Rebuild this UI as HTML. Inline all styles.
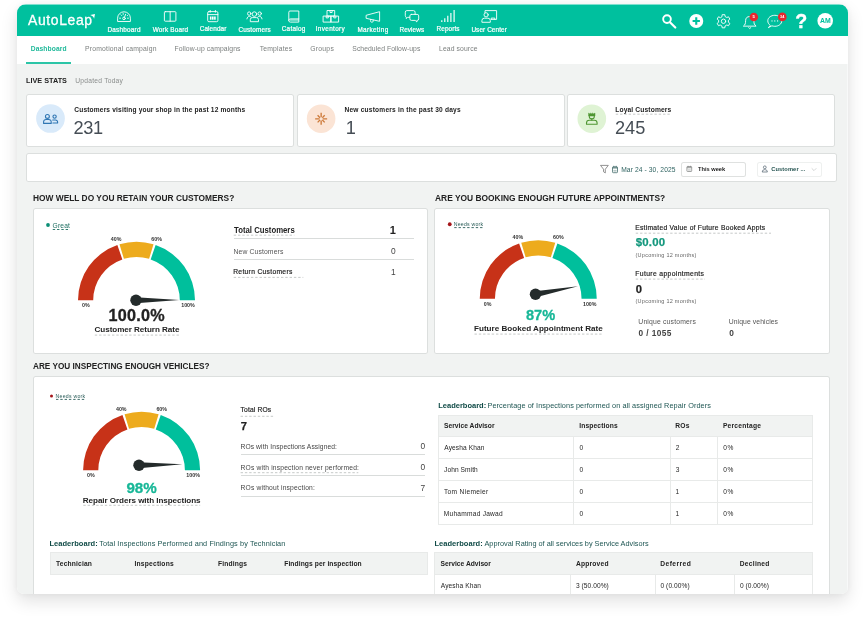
<!DOCTYPE html>
<html lang="en"><head><meta charset="utf-8"><title>AutoLeap Dashboard</title>
<style>
html,body{margin:0;padding:0;background:#fff;}
body{width:864px;height:620px;overflow:hidden;position:relative;font-family:"Liberation Sans", sans-serif;}
#frame{position:absolute;left:17.0px;top:4.0px;width:831.0px;height:590.0px;border-radius:9px 9px 7px 7px;overflow:hidden;background:#f1f3f2;}
#shadow{position:absolute;left:17.0px;top:4.0px;width:831.0px;height:590.0px;border-radius:9px 9px 7px 7px;box-shadow:0 7px 17px rgba(0,0,0,0.12),0 0 6px rgba(0,0,0,0.045);}
#page{will-change:transform;position:absolute;left:-17.0px;top:-4.0px;width:864px;height:620px;}
.b{position:absolute;box-sizing:border-box;}
.t{position:absolute;white-space:pre;line-height:normal;}
svg.ov{position:absolute;left:0;top:0;}
</style></head>
<body>
<div id="shadow"></div>
<div id="frame"><div id="page">

<div class="b" style="left:17.00px;top:4.00px;width:831.00px;height:31.80px;background:#00c09e;"></div>
<div class="b" style="left:17.00px;top:4.00px;width:831.00px;height:1.00px;background:#7fdfce;"></div>
<div class="b" style="left:17.00px;top:35.80px;width:831.00px;height:28.20px;background:#fff;"></div>
<div class="b" style="left:26.20px;top:62.00px;width:45.00px;height:2.00px;background:#2cc5a7;"></div>
<div class="b" style="left:26.00px;top:94.00px;width:268.00px;height:53.00px;background:#fff;box-shadow:inset 0 0 0 1px #dcdfde;border-radius:2.5px;"></div>
<div class="b" style="left:296.75px;top:94.00px;width:268.25px;height:53.00px;background:#fff;box-shadow:inset 0 0 0 1px #dcdfde;border-radius:2.5px;"></div>
<div class="b" style="left:567.00px;top:94.00px;width:268.00px;height:53.00px;background:#fff;box-shadow:inset 0 0 0 1px #dcdfde;border-radius:2.5px;"></div>
<div class="b" style="left:26.00px;top:152.75px;width:811.00px;height:29.25px;background:#fff;box-shadow:inset 0 0 0 1px #dcdfde;border-radius:2.5px;"></div>
<div class="b" style="left:681.25px;top:161.50px;width:64.75px;height:15.30px;background:#fff;box-shadow:inset 0 0 0 1px #dfe1e0;border-radius:2.5px;"></div>
<div class="b" style="left:756.75px;top:161.50px;width:65.25px;height:15.30px;background:#fff;box-shadow:inset 0 0 0 1px #eef0ef;border-radius:2.5px;"></div>
<div class="b" style="left:33.00px;top:208.30px;width:395.10px;height:145.30px;background:#fff;box-shadow:inset 0 0 0 1px #dcdfde;border-radius:2.5px;"></div>
<div class="b" style="left:434.00px;top:208.30px;width:396.00px;height:145.30px;background:#fff;box-shadow:inset 0 0 0 1px #dcdfde;border-radius:2.5px;"></div>
<div class="b" style="left:33.00px;top:376.00px;width:797.00px;height:264.00px;background:#fff;box-shadow:inset 0 0 0 1px #dcdfde;border-radius:2.5px;"></div>
<div class="b" style="left:233.70px;top:238.20px;width:180.60px;height:1px;background:#d9dcdb"></div>
<div class="b" style="left:233.70px;top:259.20px;width:180.60px;height:1px;background:#d9dcdb"></div>
<div class="b" style="left:240.60px;top:454.20px;width:184.10px;height:1px;background:#d9dcdb"></div>
<div class="b" style="left:240.60px;top:475.20px;width:184.10px;height:1px;background:#d9dcdb"></div>
<div class="b" style="left:240.60px;top:495.90px;width:184.10px;height:1px;background:#d9dcdb"></div>
<div class="b" style="left:438.00px;top:415.00px;width:375.00px;height:21.30px;background:#f1f3f2;"></div>
<div class="b" style="left:438.00px;top:436.30px;width:375.00px;height:88.00px;background:#fff;"></div>
<div class="b" style="left:438.00px;top:414.50px;width:375.00px;height:1px;background:#e8eae9"></div>
<div class="b" style="left:438.00px;top:435.80px;width:375.00px;height:1px;background:#e8eae9"></div>
<div class="b" style="left:438.00px;top:457.80px;width:375.00px;height:1px;background:#e8eae9"></div>
<div class="b" style="left:438.00px;top:479.80px;width:375.00px;height:1px;background:#e8eae9"></div>
<div class="b" style="left:438.00px;top:501.80px;width:375.00px;height:1px;background:#e8eae9"></div>
<div class="b" style="left:438.00px;top:523.80px;width:375.00px;height:1px;background:#e8eae9"></div>
<div class="b" style="left:438.00px;top:415.00px;width:1px;height:109.30px;background:#e8eae9"></div>
<div class="b" style="left:573.00px;top:436.30px;width:1px;height:88.00px;background:#e8eae9"></div>
<div class="b" style="left:670.10px;top:436.30px;width:1px;height:88.00px;background:#e8eae9"></div>
<div class="b" style="left:717.10px;top:436.30px;width:1px;height:88.00px;background:#e8eae9"></div>
<div class="b" style="left:812.00px;top:415.00px;width:1px;height:109.30px;background:#e8eae9"></div>
<div class="b" style="left:49.50px;top:552.00px;width:378.75px;height:22.75px;background:#f1f3f2;box-shadow:inset 0 0 0 1px #e8eae9;"></div>
<div class="b" style="left:434.00px;top:552.00px;width:379.00px;height:22.50px;background:#f1f3f2;"></div>
<div class="b" style="left:434.00px;top:574.50px;width:379.00px;height:25.50px;background:#fff;"></div>
<div class="b" style="left:434.00px;top:552.00px;width:379.00px;height:1px;background:#e8eae9"></div>
<div class="b" style="left:434.00px;top:574.00px;width:379.00px;height:1px;background:#e8eae9"></div>
<div class="b" style="left:434.00px;top:552.00px;width:1px;height:48.00px;background:#e8eae9"></div>
<div class="b" style="left:570.00px;top:574.50px;width:1px;height:25.50px;background:#e8eae9"></div>
<div class="b" style="left:655.00px;top:574.50px;width:1px;height:25.50px;background:#e8eae9"></div>
<div class="b" style="left:734.00px;top:574.50px;width:1px;height:25.50px;background:#e8eae9"></div>
<div class="b" style="left:812.00px;top:552.00px;width:1px;height:48.00px;background:#e8eae9"></div>
<div class="b" style="left:846.60px;top:64.00px;width:1.40px;height:530.00px;background:#f8f9f9;"></div>

<svg class="ov" width="864" height="620" viewBox="0 0 864 620">
<path d="M90.2 15.1 L95 14 L94.1 18.7 C93.7 17 92.6 16 90.2 15.1 Z" fill="#fff"/>
<g fill="none" stroke="#fff" stroke-width="0.9" stroke-linejoin="round" stroke-linecap="round"><path d="M117.6 21.1 V18.2 a6.4 6.4 0 0 1 12.8 0 V21.1 Z"/><circle cx="124" cy="18.4" r="1.3"/><path d="M124.5 17.2 L125.6 14.3 M119.6 18.2 h0.9 M127.5 18.2 h0.9 M121 14.9 l0.6 0.6 M127.6 15.3 l-0.4 0.4 M123.2 13.6 v0.8"/></g>
<g fill="none" stroke="#fff" stroke-width="0.9" stroke-linejoin="round" stroke-linecap="round"><rect x="164.4" y="11.7" width="11.5" height="9.5" rx="0.8"/><path d="M170.15 11.7 V21.2"/></g>
<g fill="none" stroke="#fff" stroke-width="0.9" stroke-linejoin="round" stroke-linecap="round"><rect x="207.7" y="11.6" width="10.2" height="10.1" rx="1.2"/><path d="M207.7 14.6 H217.9 M210.2 10.4 V12.2 M215.4 10.4 V12.2"/></g><g fill="#fff"><rect x="209.9" y="16.5" width="1.6" height="3.2"/><rect x="212" y="16.5" width="1.6" height="3.2"/><rect x="214.1" y="16.5" width="1.6" height="3.2"/></g>
<g fill="none" stroke="#fff" stroke-width="0.9" stroke-linejoin="round" stroke-linecap="round"><circle cx="254.4" cy="14.1" r="2.3"/><circle cx="249.2" cy="13.6" r="1.7"/><circle cx="259.7" cy="13.6" r="1.7"/><path d="M250.3 21.3 V19.6 a2 2 0 0 1 2 -2 h4.2 a2 2 0 0 1 2 2 V21.3 Z"/><path d="M246.9 18.9 c0.2 -1.6 1.2 -2.5 2.6 -2.5 c0.7 0 1.2 0.2 1.6 0.6 M262 18.9 c-0.2 -1.6 -1.2 -2.5 -2.6 -2.5 c-0.7 0 -1.2 0.2 -1.6 0.6"/></g>
<g fill="none" stroke="#fff" stroke-width="0.9" stroke-linejoin="round" stroke-linecap="round"><path d="M288.8 20.5 V12.2 a1.2 1.2 0 0 1 1.2 -1.2 H298.8 V22.1 H290.4 a1.6 1.6 0 0 1 0 -3.2 H298.8"/></g><path d="M290 20 H298.8" stroke="#fff" stroke-width="1.4" fill="none" opacity="0.6"/>
<g fill="none" stroke="#fff" stroke-width="0.9" stroke-linejoin="round" stroke-linecap="round"><rect x="327.4" y="10.5" width="7.3" height="5.6"/><rect x="323.5" y="16.1" width="7.6" height="6"/><rect x="331.1" y="16.1" width="7.5" height="6"/><path d="M330 10.5 v2 h2.1 v-2 M326.2 16.1 v1.8 h2.1 v-1.8 M333.8 16.1 v1.8 h2.1 v-1.8"/></g>
<g fill="none" stroke="#fff" stroke-width="0.9" stroke-linejoin="round" stroke-linecap="round"><path d="M366.5 15.2 L379.6 11.7 V21.3 L366.5 18.4 Z"/><path d="M370.6 19.4 v1.2 a1.3 1.3 0 0 0 2.6 0.6 v-1.2"/></g>
<g fill="none" stroke="#fff" stroke-width="0.9" stroke-linejoin="round" stroke-linecap="round"><path d="M409.6 17.3 H407.6 L406.3 18.6 V17.2 a1.6 1.6 0 0 1 -1 -1.5 V12.2 a1.6 1.6 0 0 1 1.6 -1.6 h6.6 a1.6 1.6 0 0 1 1.6 1.6 V14.4"/><path d="M411.4 14.4 h5.8 a1.5 1.5 0 0 1 1.5 1.5 v3 a1.5 1.5 0 0 1 -1.5 1.5 h-0.3 v1.6 l-1.7 -1.6 h-3.8 a1.5 1.5 0 0 1 -1.5 -1.5 v-3 a1.5 1.5 0 0 1 1.5 -1.5 Z"/></g>
<g stroke="#fff" stroke-width="1.15" fill="none"><path d="M441.8 21.9 V20.2 M444.8 21.9 V18.2 M447.8 21.9 V15.8 M450.9 21.9 V13 M454.1 21.9 V10"/></g>
<g fill="none" stroke="#fff" stroke-width="0.9" stroke-linejoin="round" stroke-linecap="round"><path d="M485 12.6 V10.6 H496.6 V19.4 H491.4"/><circle cx="486.1" cy="14.8" r="2.1"/><path d="M481.9 21.9 V20.6 a2.4 2.4 0 0 1 2.4 -2.4 h3.6 a2.4 2.4 0 0 1 2.4 2.4 V21.9 Z"/><path d="M491.2 19.4 v-1.3 h3.6 v1.3"/></g>
<circle cx="667" cy="19.1" r="3.85" fill="none" stroke="#fff" stroke-width="1.9"/><path d="M670.2 22.5 L675.3 27.5" stroke="#fff" stroke-width="2.2" stroke-linecap="round"/>
<circle cx="696.25" cy="21" r="7" fill="#fff"/><path d="M692.6 21 H699.9 M696.25 17.35 V24.65" stroke="#00c09e" stroke-width="2.1"/>
<path d="M721.93 16.50 L722.17 14.68 L724.83 14.68 L725.07 16.50 L726.82 17.51 L728.52 16.81 L729.85 19.12 L728.40 20.24 L728.40 22.26 L729.85 23.38 L728.52 25.69 L726.82 24.99 L725.07 26.00 L724.83 27.82 L722.17 27.82 L721.93 26.00 L720.18 24.99 L718.48 25.69 L717.15 23.38 L718.60 22.26 L718.60 20.24 L717.15 19.12 L718.48 16.81 L720.18 17.51 Z" fill="none" stroke="#fff" stroke-width="0.9" stroke-linejoin="round" stroke-linecap="round"/><circle cx="723.5" cy="21.25" r="2.2" fill="none" stroke="#fff" stroke-width="0.9" stroke-linejoin="round" stroke-linecap="round"/>
<g fill="none" stroke="#fff" stroke-width="0.9" stroke-linejoin="round" stroke-linecap="round"><path d="M743.7 25.9 c1.5 -1.2 1.9 -2.4 1.9 -5.2 a4.15 4.15 0 0 1 8.3 0 c0 2.8 0.4 4 1.9 5.2 Z"/><path d="M748.7 27.6 l1.05 0.9 l1.05 -0.9"/></g>
<circle cx="753.8" cy="17" r="4.3" fill="#e9262e"/>
<g fill="none" stroke="#fff" stroke-width="0.9" stroke-linejoin="round" stroke-linecap="round"><path d="M770 25.2 c-1.4 -1.1 -2.2 -2.6 -2.2 -4.4 c0 -3.1 3.1 -5.5 7 -5.5 s7 2.4 7 5.5 s-3.1 5.5 -7 5.5 c-1 0 -2 -0.2 -2.9 -0.5 l-3.2 1.7 Z"/></g><g fill="#fff"><circle cx="772" cy="20.9" r="0.6"/><circle cx="774.8" cy="20.9" r="0.6"/><circle cx="777.6" cy="20.9" r="0.6"/></g>
<circle cx="782.3" cy="16.9" r="4.35" fill="#e9262e"/>
<circle cx="825.2" cy="20.7" r="7.8" fill="#fff"/>
<circle cx="50.5" cy="118.5" r="14.35" fill="#d9eafa"/>
<circle cx="321.1" cy="118.7" r="14.3" fill="#fbe4d5"/>
<circle cx="591.8" cy="118.7" r="14.3" fill="#dff3d4"/>
<line x1="615.75" y1="114.20" x2="671.00" y2="114.20" stroke="#c0c3c2" stroke-width="0.9" stroke-dasharray="2.4 1.9"/>
<g fill="none" stroke="#2f76b3" stroke-width="1.1" stroke-linecap="round" stroke-linejoin="round"><circle cx="47.4" cy="116.4" r="1.95"/><path d="M43.6 123.4 V121.9 a2.4 2.4 0 0 1 2.4 -2.4 h2.8 a2.4 2.4 0 0 1 2.4 2.4 V123.4 Z"/><circle cx="54.6" cy="116.6" r="1.65"/><path d="M52.7 120 h2.8 a2.1 2.1 0 0 1 2.1 2.1 V123 H52.9"/></g>
<path d="M322.75 118.85 L327.15 118.85 M322.35 120.05 L324.69 122.39 M321.15 120.45 L321.15 124.85 M319.95 120.05 L317.61 122.39 M319.55 118.85 L315.15 118.85 M319.95 117.65 L317.61 115.31 M321.15 117.25 L321.15 112.85 M322.35 117.65 L324.69 115.31 " fill="none" stroke="#cd7a3a" stroke-width="1.35" stroke-linecap="butt"/>
<path d="M588.6 113.1 l1.3 0.8 l0.95 -0.9 l0.95 0.9 l0.95 -0.9 l0.95 0.9 l1.3 -0.8 V116 H588.6 Z" fill="#4f9632" stroke="#4f9632" stroke-width="0.5" stroke-linejoin="round"/>
<g fill="none" stroke="#4f9632" stroke-width="1.1" stroke-linecap="round" stroke-linejoin="round"><path d="M589.3 116 v0.4 a2.5 2.5 0 0 0 5 0 v-0.4"/><path d="M591.8 118.9 v1.2"/><path d="M586.5 124.3 V123 a2.8 2.8 0 0 1 2.8 -2.8 h5 a2.8 2.8 0 0 1 2.8 2.8 V124.3 Z"/></g>
<path d="M600.5 165.4 H608.3 L605.3 169.2 V172.9 L603.5 171.7 V169.2 Z" fill="none" stroke="#777" stroke-width="0.8" stroke-linejoin="round"/>
<g fill="none" stroke="#3b6665" stroke-width="0.75" stroke-linejoin="round"><rect x="612.5" y="166.9" width="5" height="5.8" rx="0.8"/><path d="M613.8 165.8 V167.4 M616.2 165.8 V167.4"/></g><rect x="612.5" y="166.9" width="5" height="1.8" fill="#3b6665" opacity="0.55"/><rect x="613.4" y="169.9" width="3.2" height="1.7" fill="#34605f" opacity="0.35"/>
<g fill="none" stroke="#8a8d8c" stroke-width="0.8"><rect x="686.9" y="166.6" width="4.8" height="4.9" rx="0.6"/><path d="M688.1 165.8 V167 M690.5 165.8 V167"/></g><rect x="686.9" y="166.6" width="4.8" height="1.7" fill="#8a8d8c" opacity="0.7"/><rect x="687.8" y="169.2" width="3" height="1.5" fill="#8a8d8c" opacity="0.4"/>
<g fill="none" stroke="#4d5f6b" stroke-width="0.7" stroke-linejoin="round"><circle cx="764.8" cy="167.3" r="1.4"/><path d="M762.2 172 a2.6 2.4 0 0 1 5.2 0 Z"/></g>
<path d="M811.7 168.3 L814 170.6 L816.3 168.3" fill="none" stroke="#c9cccb" stroke-width="0.8"/>
<path d="M78.00 300.30 A58.5 58.5 0 0 1 117.36 245.02 L122.33 259.38 A43.3 43.3 0 0 0 93.20 300.30 Z" fill="#c73218"/>
<path d="M119.49 244.33 A58.5 58.5 0 0 1 153.51 244.33 L149.09 258.87 A43.3 43.3 0 0 0 123.91 258.87 Z" fill="#edab1d"/>
<path d="M155.64 245.02 A58.5 58.5 0 0 1 195.00 300.30 L179.80 300.30 A43.3 43.3 0 0 0 150.67 259.38 Z" fill="#00bf9c"/>
<path d="M136.02 303.25 L179.20 300.00 L135.98 297.25 Z" fill="#242b2b"/><circle cx="136" cy="300.25" r="5.7" fill="#242b2b"/>
<circle cx="48" cy="225" r="1.9" fill="#0b8f76"/>
<line x1="52.75" y1="229.50" x2="70.00" y2="229.50" stroke="#1d6e60" stroke-width="0.9" stroke-dasharray="2.4 1.9"/>
<line x1="94.80" y1="335.10" x2="179.00" y2="335.10" stroke="#c0c3c2" stroke-width="0.9" stroke-dasharray="2.4 1.9"/>
<line x1="233.70" y1="235.20" x2="294.30" y2="235.20" stroke="#c0c3c2" stroke-width="0.9" stroke-dasharray="2.4 1.9"/>
<line x1="233.70" y1="277.40" x2="303.30" y2="277.40" stroke="#c0c3c2" stroke-width="0.9" stroke-dasharray="2.4 1.9"/>
<path d="M479.75 298.80 A58.5 58.5 0 0 1 519.11 243.52 L524.08 257.88 A43.3 43.3 0 0 0 494.95 298.80 Z" fill="#c73218"/>
<path d="M521.24 242.83 A58.5 58.5 0 0 1 555.26 242.83 L550.84 257.37 A43.3 43.3 0 0 0 525.66 257.37 Z" fill="#edab1d"/>
<path d="M557.39 243.52 A58.5 58.5 0 0 1 596.75 298.80 L581.55 298.80 A43.3 43.3 0 0 0 552.42 257.88 Z" fill="#00bf9c"/>
<path d="M536.06 297.20 L578.00 286.20 L534.94 291.30 Z" fill="#242b2b"/><circle cx="535.5" cy="294.25" r="5.7" fill="#242b2b"/>
<circle cx="449.75" cy="224.25" r="1.9" fill="#a5161a"/>
<line x1="454.25" y1="227.60" x2="483.00" y2="227.60" stroke="#2c5e5a" stroke-width="0.9" stroke-dasharray="2.4 1.9"/>
<line x1="474.50" y1="334.10" x2="602.50" y2="334.10" stroke="#c0c3c2" stroke-width="0.9" stroke-dasharray="2.4 1.9"/>
<line x1="635.75" y1="233.20" x2="771.00" y2="233.20" stroke="#c0c3c2" stroke-width="0.9" stroke-dasharray="2.4 1.9"/>
<line x1="635.75" y1="279.10" x2="705.00" y2="279.10" stroke="#c0c3c2" stroke-width="0.9" stroke-dasharray="2.4 1.9"/>
<path d="M83.10 470.30 A58.5 58.5 0 0 1 122.46 415.02 L127.43 429.38 A43.3 43.3 0 0 0 98.30 470.30 Z" fill="#c73218"/>
<path d="M124.59 414.33 A58.5 58.5 0 0 1 158.61 414.33 L154.19 428.87 A43.3 43.3 0 0 0 129.01 428.87 Z" fill="#edab1d"/>
<path d="M160.74 415.02 A58.5 58.5 0 0 1 200.10 470.30 L184.90 470.30 A43.3 43.3 0 0 0 155.77 429.38 Z" fill="#00bf9c"/>
<path d="M139.07 468.25 L182.30 464.20 L138.93 462.25 Z" fill="#242b2b"/><circle cx="139" cy="465.25" r="5.7" fill="#242b2b"/>
<circle cx="51.5" cy="396" r="1.5" fill="#a5161a"/>
<line x1="56.00" y1="399.40" x2="85.00" y2="399.40" stroke="#2c5e5a" stroke-width="0.9" stroke-dasharray="2.4 1.9"/>
<line x1="83.30" y1="505.30" x2="200.20" y2="505.30" stroke="#c0c3c2" stroke-width="0.9" stroke-dasharray="2.4 1.9"/>
<line x1="240.60" y1="416.30" x2="274.00" y2="416.30" stroke="#c0c3c2" stroke-width="0.9" stroke-dasharray="2.4 1.9"/>
<line x1="240.60" y1="472.70" x2="358.30" y2="472.70" stroke="#c0c3c2" stroke-width="0.9" stroke-dasharray="2.4 1.9"/>
</svg>

<span class="t" style="top:12.00px;font-size:13.9px;color:#fff;-webkit-text-stroke:0.3px #fff;letter-spacing:0.643px;left:28.10px;">AutoLeap</span>
<span class="t" style="top:26.00px;font-size:6.4px;color:#fff;-webkit-text-stroke:0.2px #fff;letter-spacing:0.231px;left:107.40px;">Dashboard</span>
<span class="t" style="top:26.00px;font-size:6.4px;color:#fff;-webkit-text-stroke:0.2px #fff;letter-spacing:0.194px;left:152.75px;">Work Board</span>
<span class="t" style="top:25.00px;font-size:6.4px;color:#fff;-webkit-text-stroke:0.2px #fff;letter-spacing:0.093px;left:199.75px;">Calendar</span>
<span class="t" style="top:26.00px;font-size:6.4px;color:#fff;-webkit-text-stroke:0.2px #fff;letter-spacing:0.169px;left:238.50px;">Customers</span>
<span class="t" style="top:25.00px;font-size:6.4px;color:#fff;-webkit-text-stroke:0.2px #fff;letter-spacing:0.250px;left:281.75px;">Catalog</span>
<span class="t" style="top:25.00px;font-size:6.4px;color:#fff;-webkit-text-stroke:0.2px #fff;letter-spacing:0.344px;left:315.75px;">Inventory</span>
<span class="t" style="top:26.00px;font-size:6.4px;color:#fff;-webkit-text-stroke:0.2px #fff;letter-spacing:0.344px;left:357.40px;">Marketing</span>
<span class="t" style="top:26.00px;font-size:6.4px;color:#fff;-webkit-text-stroke:0.2px #fff;letter-spacing:0.083px;left:399.50px;">Reviews</span>
<span class="t" style="top:25.00px;font-size:6.4px;color:#fff;-webkit-text-stroke:0.2px #fff;letter-spacing:0.108px;left:436.50px;">Reports</span>
<span class="t" style="top:26.00px;font-size:6.4px;color:#fff;-webkit-text-stroke:0.2px #fff;letter-spacing:0.100px;left:471.40px;">User Center</span>
<span class="t" style="top:14.00px;font-size:4.2px;color:#fff;font-weight:700;left:752.55px;">5</span>
<span class="t" style="top:15.00px;font-size:3.8px;color:#fff;font-weight:700;left:780.05px;">34</span>
<span class="t" style="top:10.00px;font-size:19.6px;color:#fff;font-weight:700;-webkit-text-stroke:0.35px #fff;left:795.23px;">?</span>
<span class="t" style="top:17.00px;font-size:6.9px;color:#00c09e;font-weight:700;left:819.95px;">AM</span>
<span class="t" style="top:45.00px;font-size:6.7px;color:#1fb99a;font-weight:700;letter-spacing:0.125px;left:30.70px;">Dashboard</span>
<span class="t" style="top:45.00px;font-size:6.8px;color:#7b7f7e;letter-spacing:0.208px;left:85.00px;">Promotional campaign</span>
<span class="t" style="top:45.00px;font-size:6.8px;color:#7b7f7e;letter-spacing:0.094px;left:174.50px;">Follow-up campaigns</span>
<span class="t" style="top:45.00px;font-size:6.8px;color:#7b7f7e;letter-spacing:0.163px;left:259.75px;">Templates</span>
<span class="t" style="top:45.00px;font-size:6.8px;color:#7b7f7e;letter-spacing:0.250px;left:310.25px;">Groups</span>
<span class="t" style="top:45.00px;font-size:6.8px;color:#7b7f7e;letter-spacing:0.061px;left:352.30px;">Scheduled Follow-ups</span>
<span class="t" style="top:45.00px;font-size:6.8px;color:#7b7f7e;letter-spacing:0.100px;left:439.00px;">Lead source</span>
<span class="t" style="top:76.00px;font-size:8.1px;color:#222;font-weight:700;left:26.35px;transform:scaleX(0.8983);transform-origin:0 0;">LIVE STATS</span>
<span class="t" style="top:77.00px;font-size:6.7px;color:#8a8d8c;letter-spacing:0.229px;left:75.30px;">Updated Today</span>
<span class="t" style="top:106.00px;font-size:6.6px;color:#222;font-weight:700;letter-spacing:0.168px;left:74.25px;">Customers visiting your shop in the past 12 months</span>
<span class="t" style="top:118.00px;font-size:18.2px;color:#454d55;letter-spacing:-0.350px;left:73.60px;">231</span>
<span class="t" style="top:106.00px;font-size:6.6px;color:#222;font-weight:700;letter-spacing:0.205px;left:344.50px;">New customers in the past 30 days</span>
<span class="t" style="top:118.00px;font-size:18.2px;color:#454d55;left:345.70px;">1</span>
<span class="t" style="top:106.00px;font-size:6.7px;color:#222;font-weight:700;letter-spacing:0.125px;left:615.25px;">Loyal Customers</span>
<span class="t" style="top:118.00px;font-size:18.2px;color:#454d55;left:615.00px;">245</span>
<span class="t" style="top:166.00px;font-size:6.7px;color:#2f6361;letter-spacing:0.094px;left:621.20px;">Mar 24 - 30, 2025</span>
<span class="t" style="top:166.00px;font-size:5.7px;color:#222;font-weight:700;left:698.00px;">This week</span>
<span class="t" style="top:166.00px;font-size:5.7px;color:#1f4f4c;font-weight:700;letter-spacing:0.114px;left:771.25px;">Customer ...</span>
<span class="t" style="top:193.00px;font-size:8.6px;color:#222;font-weight:700;left:32.91px;transform:scaleX(0.9728);transform-origin:0 0;">HOW WELL DO YOU RETAIN YOUR CUSTOMERS?</span>
<span class="t" style="top:193.00px;font-size:8.6px;color:#222;font-weight:700;left:434.56px;transform:scaleX(0.9776);transform-origin:0 0;">ARE YOU BOOKING ENOUGH FUTURE APPOINTMENTS?</span>
<span class="t" style="top:361.00px;font-size:8.6px;color:#222;font-weight:700;left:33.26px;transform:scaleX(0.9554);transform-origin:0 0;">ARE YOU INSPECTING ENOUGH VEHICLES?</span>
<span class="t" style="top:302.00px;font-size:5.3px;color:#333;font-weight:700;left:82.03px;">0%</span>
<span class="t" style="top:302.00px;font-size:5.3px;color:#333;font-weight:700;left:181.22px;">100%</span>
<span class="t" style="top:236.00px;font-size:5.3px;color:#333;font-weight:700;left:110.85px;">40%</span>
<span class="t" style="top:236.00px;font-size:5.3px;color:#333;font-weight:700;left:151.32px;">60%</span>
<span class="t" style="top:222.00px;font-size:6.7px;color:#1d6e60;letter-spacing:0.188px;left:52.50px;">Great</span>
<span class="t" style="top:306.00px;font-size:16.2px;color:#222;font-weight:700;-webkit-text-stroke:0.3px #222;letter-spacing:0.230px;left:108.55px;">100.0%</span>
<span class="t" style="top:325.00px;font-size:8.1px;color:#222;font-weight:700;letter-spacing:-0.055px;left:94.55px;">Customer Return Rate</span>
<span class="t" style="top:225.00px;font-size:8.5px;color:#222;font-weight:700;left:234.00px;transform:scaleX(0.9136);transform-origin:0 0;">Total Customers</span>
<span class="t" style="top:224.00px;font-size:11px;color:#222;font-weight:700;left:389.65px;">1</span>
<span class="t" style="top:248.00px;font-size:6.8px;color:#555;letter-spacing:0.125px;left:233.50px;">New Customers</span>
<span class="t" style="top:246.00px;font-size:8.4px;color:#444;left:390.95px;">0</span>
<span class="t" style="top:268.00px;font-size:6.7px;color:#222;-webkit-text-stroke:0.18px #222;letter-spacing:0.323px;left:233.20px;">Return Customers</span>
<span class="t" style="top:267.00px;font-size:8.4px;color:#444;left:391.10px;">1</span>
<span class="t" style="top:301.00px;font-size:5.3px;color:#333;font-weight:700;left:483.77px;">0%</span>
<span class="t" style="top:301.00px;font-size:5.3px;color:#333;font-weight:700;left:582.98px;">100%</span>
<span class="t" style="top:234.00px;font-size:5.3px;color:#333;font-weight:700;left:512.60px;">40%</span>
<span class="t" style="top:234.00px;font-size:5.3px;color:#333;font-weight:700;left:553.08px;">60%</span>
<span class="t" style="top:221.00px;font-size:5.2px;color:#2c5e5a;letter-spacing:0.222px;left:453.75px;">Needs work</span>
<span class="t" style="top:306.00px;font-size:15.2px;color:#17b797;font-weight:700;-webkit-text-stroke:0.3px #17b797;left:525.56px;transform:scaleX(0.9600);transform-origin:0 0;">87%</span>
<span class="t" style="top:324.00px;font-size:8.1px;color:#222;font-weight:700;left:474.00px;">Future Booked Appointment Rate</span>
<span class="t" style="top:224.00px;font-size:6.7px;color:#222;-webkit-text-stroke:0.18px #222;letter-spacing:0.270px;left:635.25px;">Estimated Value of Future Booked Appts</span>
<span class="t" style="top:236.00px;font-size:11.4px;color:#14977d;font-weight:700;-webkit-text-stroke:0.25px #14977d;letter-spacing:0.200px;left:635.75px;">$0.00</span>
<span class="t" style="top:252.00px;font-size:5.5px;color:#666;letter-spacing:0.276px;left:635.50px;">(Upcoming 12 months)</span>
<span class="t" style="top:270.00px;font-size:6.8px;color:#222;-webkit-text-stroke:0.18px #222;letter-spacing:0.356px;left:635.25px;">Future appointments</span>
<span class="t" style="top:283.00px;font-size:11.2px;color:#222;font-weight:700;-webkit-text-stroke:0.25px #222;left:635.80px;">0</span>
<span class="t" style="top:298.00px;font-size:5.5px;color:#666;letter-spacing:0.276px;left:635.50px;">(Upcoming 12 months)</span>
<span class="t" style="top:318.00px;font-size:6.8px;color:#555;letter-spacing:0.187px;left:638.30px;">Unique customers</span>
<span class="t" style="top:328.00px;font-size:8.3px;color:#444;font-weight:700;letter-spacing:0.414px;left:638.55px;">0 / 1055</span>
<span class="t" style="top:318.00px;font-size:6.8px;color:#555;letter-spacing:0.096px;left:728.70px;">Unique vehicles</span>
<span class="t" style="top:328.00px;font-size:8.3px;color:#444;font-weight:700;left:729.15px;">0</span>
<span class="t" style="top:472.00px;font-size:5.3px;color:#333;font-weight:700;left:87.12px;">0%</span>
<span class="t" style="top:472.00px;font-size:5.3px;color:#333;font-weight:700;left:186.32px;">100%</span>
<span class="t" style="top:406.00px;font-size:5.3px;color:#333;font-weight:700;left:115.95px;">40%</span>
<span class="t" style="top:406.00px;font-size:5.3px;color:#333;font-weight:700;left:156.42px;">60%</span>
<span class="t" style="top:393.00px;font-size:5.2px;color:#2c5e5a;letter-spacing:0.250px;left:55.50px;">Needs work</span>
<span class="t" style="top:479.00px;font-size:15.2px;color:#17b797;font-weight:700;-webkit-text-stroke:0.3px #17b797;letter-spacing:-0.125px;left:126.50px;">98%</span>
<span class="t" style="top:496.00px;font-size:8.1px;color:#222;font-weight:700;letter-spacing:-0.064px;left:82.80px;">Repair Orders with Inspections</span>
<span class="t" style="top:406.00px;font-size:6.7px;color:#222;-webkit-text-stroke:0.18px #222;letter-spacing:0.144px;left:240.60px;">Total ROs</span>
<span class="t" style="top:420.00px;font-size:11.2px;color:#222;font-weight:700;-webkit-text-stroke:0.25px #222;left:240.65px;">7</span>
<span class="t" style="top:443.00px;font-size:6.7px;color:#444;letter-spacing:0.097px;left:240.50px;">ROs with Inspections Assigned:</span>
<span class="t" style="top:441.00px;font-size:8.4px;color:#444;left:420.45px;">0</span>
<span class="t" style="top:464.00px;font-size:6.7px;color:#444;letter-spacing:0.187px;left:240.50px;">ROs with inspection never performed:</span>
<span class="t" style="top:462.00px;font-size:8.4px;color:#444;left:420.45px;">0</span>
<span class="t" style="top:484.00px;font-size:6.7px;color:#444;letter-spacing:0.184px;left:240.50px;">ROs without inspection:</span>
<span class="t" style="top:483.00px;font-size:8.4px;color:#444;left:420.45px;">7</span>
<span class="t" style="top:401.00px;font-size:7.5px;color:#0f4a46;font-weight:700;left:438.25px;">Leaderboard:</span>
<span class="t" style="top:401.00px;font-size:7.3px;color:#1d5552;letter-spacing:0.080px;left:487.50px;">Percentage of Inspections performed on all assigned Repair Orders</span>
<span class="t" style="top:422.00px;font-size:6.7px;color:#222;font-weight:700;letter-spacing:0.018px;left:444.00px;">Service Advisor</span>
<span class="t" style="top:422.00px;font-size:6.7px;color:#222;font-weight:700;letter-spacing:0.125px;left:579.25px;">Inspections</span>
<span class="t" style="top:422.00px;font-size:6.7px;color:#222;font-weight:700;letter-spacing:0.200px;left:675.30px;">ROs</span>
<span class="t" style="top:422.00px;font-size:6.7px;color:#222;font-weight:700;letter-spacing:0.228px;left:722.90px;">Percentage</span>
<span class="t" style="top:444.00px;font-size:6.6px;color:#262626;letter-spacing:0.100px;left:444.25px;">Ayesha Khan</span>
<span class="t" style="top:444.00px;font-size:6.6px;color:#262626;left:579.50px;">0</span>
<span class="t" style="top:444.00px;font-size:6.6px;color:#262626;left:675.85px;">2</span>
<span class="t" style="top:444.00px;font-size:6.6px;color:#262626;letter-spacing:0.800px;left:723.15px;">0%</span>
<span class="t" style="top:466.00px;font-size:6.6px;color:#262626;letter-spacing:0.083px;left:444.00px;">John Smith</span>
<span class="t" style="top:466.00px;font-size:6.6px;color:#262626;left:579.50px;">0</span>
<span class="t" style="top:466.00px;font-size:6.6px;color:#262626;left:675.85px;">3</span>
<span class="t" style="top:466.00px;font-size:6.6px;color:#262626;letter-spacing:0.800px;left:723.15px;">0%</span>
<span class="t" style="top:488.00px;font-size:6.6px;color:#262626;letter-spacing:0.318px;left:444.00px;">Tom Niemeier</span>
<span class="t" style="top:488.00px;font-size:6.6px;color:#262626;left:579.50px;">0</span>
<span class="t" style="top:488.00px;font-size:6.6px;color:#262626;left:675.60px;">1</span>
<span class="t" style="top:488.00px;font-size:6.6px;color:#262626;letter-spacing:0.800px;left:723.15px;">0%</span>
<span class="t" style="top:510.00px;font-size:6.6px;color:#262626;letter-spacing:0.250px;left:443.75px;">Muhammad Jawad</span>
<span class="t" style="top:510.00px;font-size:6.6px;color:#262626;left:579.50px;">0</span>
<span class="t" style="top:510.00px;font-size:6.6px;color:#262626;left:675.60px;">1</span>
<span class="t" style="top:510.00px;font-size:6.6px;color:#262626;letter-spacing:0.800px;left:723.15px;">0%</span>
<span class="t" style="top:539.00px;font-size:7.5px;color:#0f4a46;font-weight:700;letter-spacing:0.023px;left:49.50px;">Leaderboard:</span>
<span class="t" style="top:539.00px;font-size:7.3px;color:#1d5552;letter-spacing:0.108px;left:99.25px;">Total Inspections Performed and Findings by Technician</span>
<span class="t" style="top:560.00px;font-size:6.7px;color:#222;font-weight:700;letter-spacing:0.167px;left:56.00px;">Technician</span>
<span class="t" style="top:560.00px;font-size:6.7px;color:#222;font-weight:700;letter-spacing:0.200px;left:134.50px;">Inspections</span>
<span class="t" style="top:560.00px;font-size:6.7px;color:#222;font-weight:700;letter-spacing:0.143px;left:218.00px;">Findings</span>
<span class="t" style="top:560.00px;font-size:6.7px;color:#222;font-weight:700;letter-spacing:0.091px;left:284.25px;">Findings per inspection</span>
<span class="t" style="top:539.00px;font-size:7.5px;color:#0f4a46;font-weight:700;letter-spacing:0.023px;left:434.50px;">Leaderboard:</span>
<span class="t" style="top:539.00px;font-size:7.3px;color:#1d5552;letter-spacing:0.005px;left:484.50px;">Approval Rating of all services by Service Advisors</span>
<span class="t" style="top:560.00px;font-size:6.7px;color:#222;font-weight:700;left:440.50px;">Service Advisor</span>
<span class="t" style="top:560.00px;font-size:6.7px;color:#222;font-weight:700;letter-spacing:0.179px;left:576.00px;">Approved</span>
<span class="t" style="top:560.00px;font-size:6.7px;color:#222;font-weight:700;letter-spacing:0.429px;left:660.25px;">Deferred</span>
<span class="t" style="top:560.00px;font-size:6.7px;color:#222;font-weight:700;letter-spacing:0.250px;left:739.75px;">Declined</span>
<span class="t" style="top:582.00px;font-size:6.6px;color:#262626;letter-spacing:0.100px;left:440.75px;">Ayesha Khan</span>
<span class="t" style="top:582.00px;font-size:6.6px;color:#262626;letter-spacing:0.056px;left:576.00px;">3 (50.00%)</span>
<span class="t" style="top:582.00px;font-size:6.6px;color:#262626;letter-spacing:0.062px;left:660.50px;">0 (0.00%)</span>
<span class="t" style="top:582.00px;font-size:6.6px;color:#262626;letter-spacing:0.031px;left:740.00px;">0 (0.00%)</span>

</div></div>
</body></html>
